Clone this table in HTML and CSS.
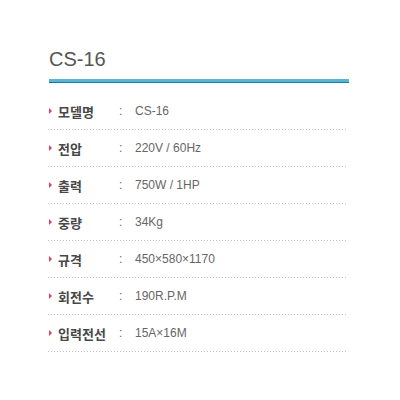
FILE: index.html
```html
<!DOCTYPE html>
<html lang="ko">
<head>
<meta charset="utf-8">
<link rel="stylesheet" href="styles.css">
</head>
<body>
<div class="spec">
  <h1 class="title">CS-16</h1>
  <div class="bar"></div>
  <ul class="rows">
    <li class="row"><span class="mark"></span><span class="label">모델명</span><span class="colon">:</span><span class="value">CS-16</span></li>
    <li class="row"><span class="mark"></span><span class="label">전압</span><span class="colon">:</span><span class="value">220V / 60Hz</span></li>
    <li class="row"><span class="mark"></span><span class="label">출력</span><span class="colon">:</span><span class="value">750W / 1HP</span></li>
    <li class="row"><span class="mark"></span><span class="label">중량</span><span class="colon">:</span><span class="value">34Kg</span></li>
    <li class="row"><span class="mark"></span><span class="label">규격</span><span class="colon">:</span><span class="value">450×580×1170</span></li>
    <li class="row"><span class="mark"></span><span class="label">회전수</span><span class="colon">:</span><span class="value">190R.P.M</span></li>
    <li class="row"><span class="mark"></span><span class="label">입력전선</span><span class="colon">:</span><span class="value">15A×16M</span></li>
  </ul>
</div>
</body>
</html>
```
FILE: styles.css
```css
html, body {
  margin: 0;
  padding: 0;
  background: #fff;
}
.spec {
  padding: 47px 0 0 48px;
  width: 301px;
  font-family: "Liberation Sans", Arial, sans-serif;
}
.title {
  margin: 0 0 8px 1px;
  font-size: 20px;
  line-height: 24px;
  font-weight: normal;
  color: #555;
}
.bar {
  margin-left: 1px;
  height: 3px;
  background: #58b6d4;
  border-bottom: 1px solid #167ca4;
}
.rows {
  list-style: none;
  margin: 10px 0 0 0;
  padding: 0;
  width: 300px;
}
.row {
  display: flex;
  align-items: center;
  height: 36px;
  padding-bottom: 1px;
  background: linear-gradient(to right, #c4c4c4 1px, transparent 1px) left bottom / 3px 1px repeat-x;
}
.mark {
  width: 0;
  height: 0;
  margin-left: 1px;
  border-top: 3px solid transparent;
  border-bottom: 3px solid transparent;
  border-left: 3px solid #d8406c;
}
.label {
  margin-left: 6px;
  width: 61px;
  font-family: "Noto Sans CJK KR", sans-serif;
  font-weight: bold;
  font-size: 13px;
  color: #484848;
}
.colon {
  width: 16px;
  font-size: 12px;
  color: #666;
}
.value {
  font-size: 12px;
  color: #666;
}
```
